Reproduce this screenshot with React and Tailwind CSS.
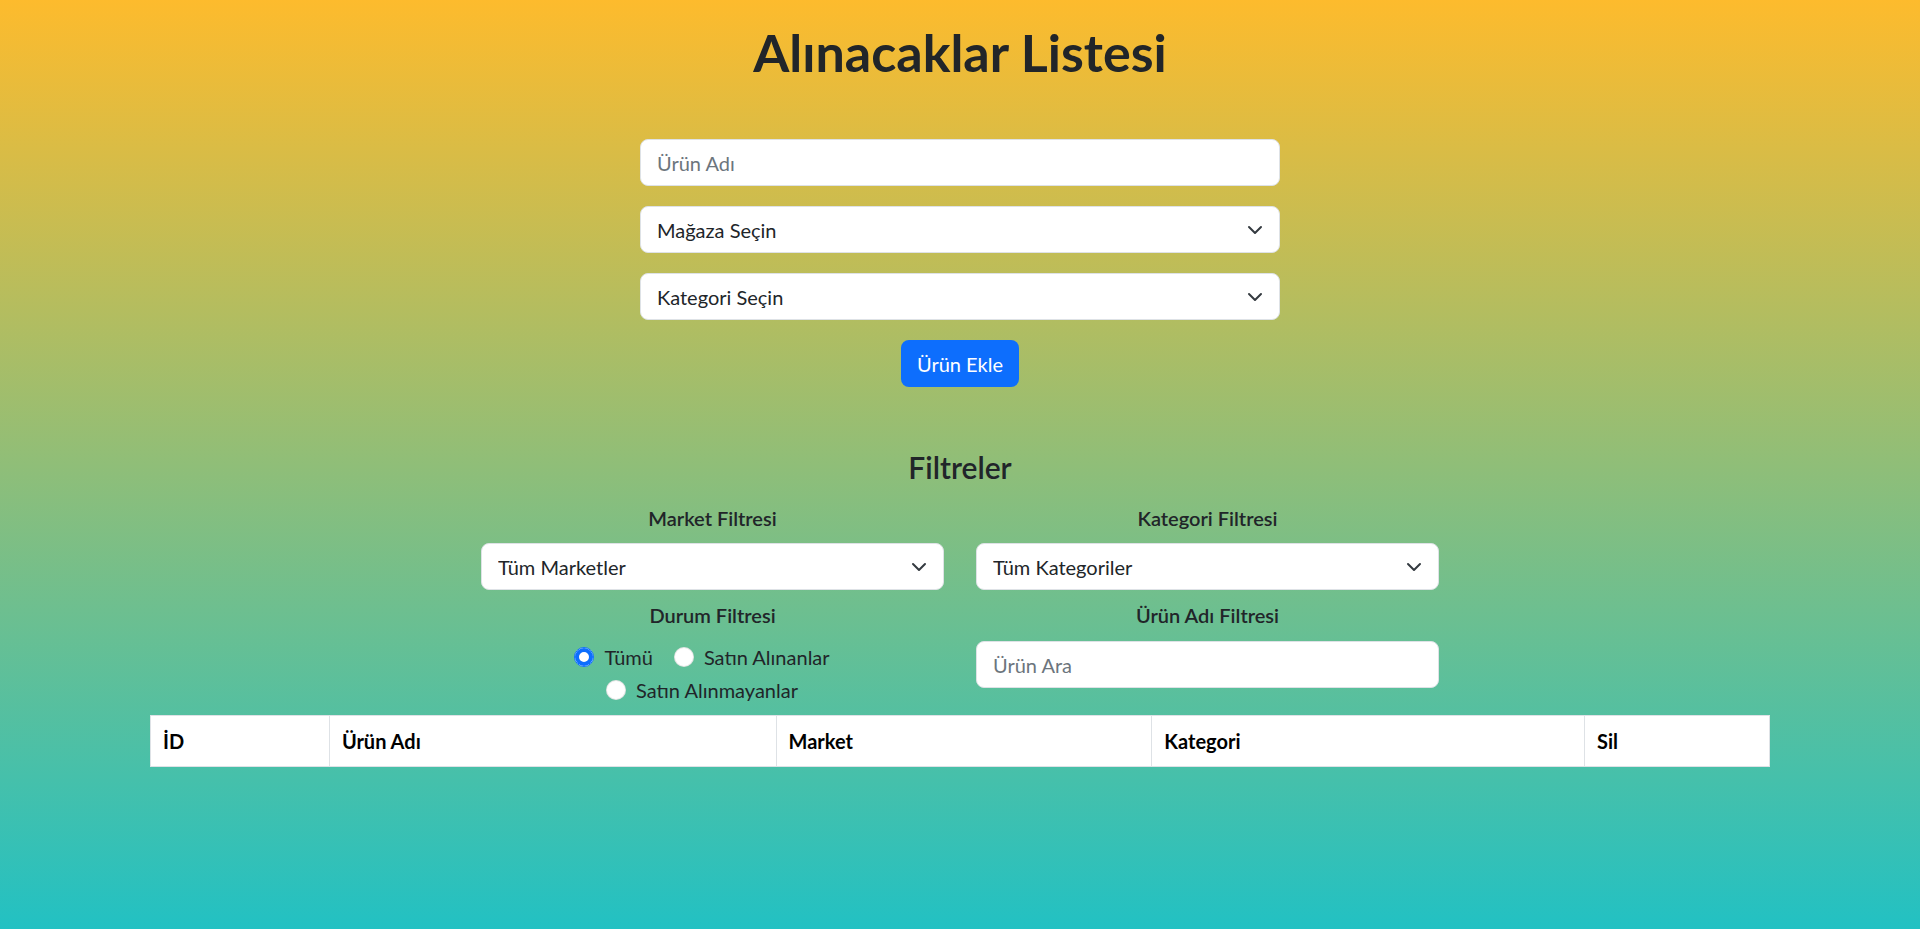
import { useState } from 'react'

const Chevron = () => (
  <svg
    className="pointer-events-none absolute right-[17px] top-1/2 -translate-y-1/2"
    width="16"
    height="16"
    viewBox="0 0 16 16"
    fill="none"
  >
    <path d="m2 5 6 6 6-6" stroke="#343a40" strokeWidth="2" strokeLinecap="round" strokeLinejoin="round" />
  </svg>
)

function Select({ options }) {
  return (
    <div className="relative">
      <select className="w-full h-[47px] appearance-none bg-white border border-[#dee2e6] rounded-lg pl-4 pr-12 text-[20px] text-[#212529] outline-none">
        {options.map((o) => (
          <option key={o}>{o}</option>
        ))}
      </select>
      <Chevron />
    </div>
  )
}

const Radio = ({ label, value, current, onChange }) => (
  <label className="inline-flex items-center mr-[21px] h-[33px] cursor-pointer">
    <input
      type="radio"
      name="durum"
      checked={current === value}
      onChange={() => onChange(value)}
      className="appearance-none w-5 h-5 rounded-full bg-white border border-black/10 checked:border-[#0d6efd] checked:shadow-[inset_0_0_0_4px_#0d6efd] mr-[10px]"
    />
    <span>{label}</span>
  </label>
)

const COLUMNS = [
  { name: 'İD', width: 'w-[179px]' },
  { name: 'Ürün Adı', width: 'w-[447px]' },
  { name: 'Market', width: 'w-[376px]' },
  { name: 'Kategori', width: 'w-[433px]' },
  { name: 'Sil', width: 'w-[185px]' },
]

export default function App() {
  const [durum, setDurum] = useState('all')

  return (
    <div className="min-h-screen bg-[linear-gradient(to_bottom,#fdbb2d,#22c1c3)] text-[#212529] font-['Lato',sans-serif] pb-10">
      <h1 className="text-center text-[52px] font-bold leading-[1.2] pt-[21px]">Alınacaklar Listesi</h1>

      {/* Ürün ekleme formu */}
      <div className="w-[640px] mx-auto mt-[56px] flex flex-col gap-[20px]">
        <input
          type="text"
          placeholder="Ürün Adı"
          className="h-[47px] bg-white border border-[#dee2e6] rounded-lg px-4 text-[20px] placeholder:text-[#6c757d] outline-none"
        />
        <Select options={['Mağaza Seçin']} />
        <Select options={['Kategori Seçin']} />
        <div className="flex justify-center">
          <button className="h-[47px] px-4 rounded-lg bg-[#0d6efd] text-white text-[20px]">Ürün Ekle</button>
        </div>
      </div>

      {/* Filtreler */}
      <h2 className="text-center text-[30px] font-semibold leading-[1.2] mt-[62px]">Filtreler</h2>
      <div className="w-[958px] mx-auto mt-[18px] grid grid-cols-2 gap-x-8 text-[20px]">
        <div className="flex flex-col gap-[10px]">
          <label className="text-center font-semibold leading-[30px]">Market Filtresi</label>
          <Select options={['Tüm Marketler']} />
        </div>
        <div className="flex flex-col gap-[10px]">
          <label className="text-center font-semibold leading-[30px]">Kategori Filtresi</label>
          <Select options={['Tüm Kategoriler']} />
        </div>
        <div className="flex flex-col mt-[10px]">
          <label className="text-center font-semibold leading-[30px]">Durum Filtresi</label>
          <div className="flex flex-wrap justify-center mt-[10px]">
            <Radio label="Tümü" value="all" current={durum} onChange={setDurum} />
            <Radio label="Satın Alınanlar" value="bought" current={durum} onChange={setDurum} />
            <Radio label="Satın Alınmayanlar" value="notbought" current={durum} onChange={setDurum} />
          </div>
        </div>
        <div className="flex flex-col gap-[11px] mt-[10px]">
          <label className="text-center font-semibold leading-[30px]">Ürün Adı Filtresi</label>
          <input
            type="text"
            placeholder="Ürün Ara"
            className="h-[47px] bg-white border border-[#dee2e6] rounded-lg px-4 text-[20px] placeholder:text-[#6c757d] outline-none"
          />
        </div>
      </div>

      {/* Liste */}
      <table className="w-[1620px] mx-auto mt-[9px] border-collapse bg-white text-[20px] text-black">
        <thead>
          <tr>
            {COLUMNS.map((c) => (
              <th key={c.name} className={`${c.width} border border-[#dee2e6] px-3 py-[10px] text-left font-bold leading-[30px]`}>
                {c.name}
              </th>
            ))}
          </tr>
        </thead>
        <tbody />
      </table>
    </div>
  )
}
